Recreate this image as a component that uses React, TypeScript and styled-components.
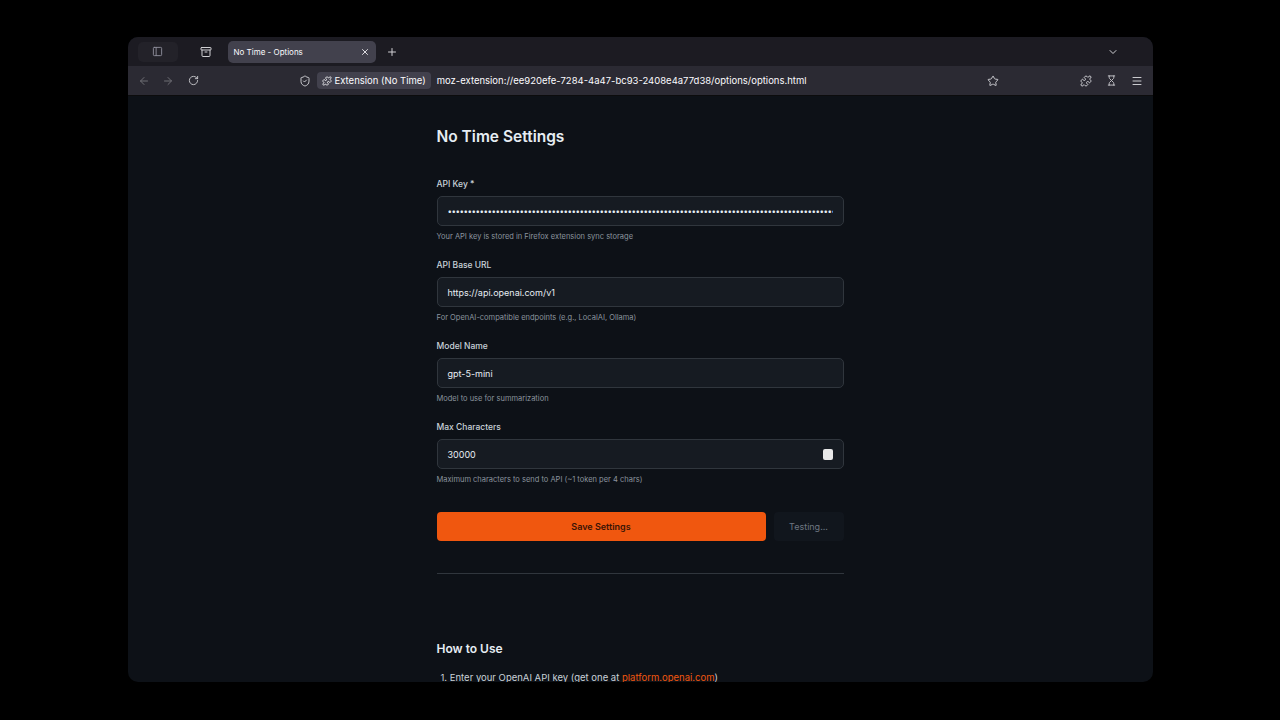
import React from "react";
import styled, { createGlobalStyle } from "styled-components";
import { ArrowLeft, ArrowRight, RotateCw, Star, Puzzle, Hourglass, Menu, ChevronDown, Plus, X, ShieldCheck, PanelLeft, Archive } from "lucide-react";

const Global = createGlobalStyle`
  html, body { margin: 0; background: #000; height: 100%; overflow: hidden; }
  body { font-family: Inter, "Liberation Sans", sans-serif; }
`;

const Screen = styled.div`
  padding-top: 37px;
  display: flex;
  justify-content: center;
`;

const Window = styled.div`
  width: 1025px;
  height: 645px;
  border-radius: 10px;
  overflow: hidden;
  background: #0d1117;
  display: flex;
  flex-direction: column;
`;

const TabBar = styled.div`
  height: 29px;
  background: #1c1b22;
  display: flex;
  align-items: center;
  padding: 0 10px;
  gap: 10px;
  color: #d0d0d4;
`;

const SideBox = styled.div`
  width: 40px;
  height: 20px;
  border-radius: 5px;
  background: #232229;
  display: flex;
  align-items: center;
  justify-content: center;
`;

const Tab = styled.div`
  width: 148px;
  height: 22px;
  margin-left: 6px;
  border-radius: 5px;
  background: #42414d;
  display: flex;
  align-items: center;
  justify-content: space-between;
  padding: 0 6px;
  box-sizing: border-box;
  font-size: 8px;
  color: #fbfbfe;
`;

const Spacer = styled.div`flex: 1;`;

const NavBar = styled.div`
  height: 29px;
  background: #2b2a33;
  display: flex;
  align-items: center;
  padding: 0 10px;
  gap: 14px;
  color: #c9c9ce;
  border-bottom: 1px solid #0c0c0d;
`;

const UrlArea = styled.div`
  margin-left: 86px;
  width: 700px;
  flex-shrink: 0;
  display: flex;
  align-items: center;
  gap: 6px;
  font-size: 9.5px;
  color: #fbfbfe;
  white-space: nowrap;
`;

const ExtChip = styled.div`
  display: flex;
  align-items: center;
  gap: 3px;
  background: #42414d;
  border-radius: 4px;
  padding: 3px 5px;
`;

const Content = styled.div`
  flex: 1;
  display: flex;
  justify-content: center;
  overflow: hidden;
`;

const Column = styled.div`
  width: 407px;
  padding-top: 31px;
  color: #e6edf3;
`;

const Title = styled.h1`
  font-size: 15.5px;
  font-weight: 600;
  margin: 0 0 33px;
`;

const Field = styled.div`
  margin-bottom: 19px;
`;

const Label = styled.div`
  font-size: 8.5px;
  font-weight: 500;
  margin-bottom: 7px;
  color: #c9d1d9;
`;

const InputBox = styled.div`
  height: 28px;
  border: 1px solid #30363d;
  border-radius: 5px;
  background: #161b22;
  display: flex;
  align-items: center;
  padding: 0 10px;
  font-size: 9px;
  color: #e6edf3;
  overflow: hidden;
  white-space: nowrap;
`;

const Dots = styled.span`
  letter-spacing: -0.5px;
  font-size: 8px;
  overflow: hidden;
  flex: 1;
`;

const Spinner = styled.div`
  width: 10px;
  height: 11px;
  background: #e8e8e8;
  border-radius: 2px;
  margin-left: auto;
`;

const Hint = styled.div`
  font-size: 7.5px;
  color: #8b949e;
  margin-top: 6px;
`;

const Buttons = styled.div`
  display: flex;
  gap: 8px;
  margin-top: 28px;
`;

const SaveBtn = styled.div`
  flex: 1;
  height: 29px;
  border-radius: 4px;
  background: #f0570f;
  color: #3a1406;
  font-size: 9px;
  font-weight: 600;
  display: flex;
  align-items: center;
  justify-content: center;
`;

const TestBtn = styled.div`
  width: 70px;
  height: 29px;
  border-radius: 4px;
  background: #11161d;
  color: #6e7681;
  font-size: 9px;
  display: flex;
  align-items: center;
  justify-content: center;
`;

const Divider = styled.hr`
  border: none;
  border-top: 1px solid #30363d;
  margin: 32px 0 0;
`;

const SubTitle = styled.h2`
  font-size: 12px;
  font-weight: 600;
  margin: 67px 0 16px;
`;

const Step = styled.div`
  font-size: 9.5px;
  color: #c9d1d9;
  padding-left: 4px;
  a { color: #f0570f; text-decoration: none; }
`;

const fields = [
  { label: "API Base URL", value: "https://api.openai.com/v1", hint: "For OpenAI-compatible endpoints (e.g., LocalAI, Ollama)" },
  { label: "Model Name", value: "gpt-5-mini", hint: "Model to use for summarization" },
];

export default function App() {
  return (
    <>
      <Global />
      <Screen>
        <Window>
          <TabBar>
            <SideBox><PanelLeft size={11} color="#8f8f9d" /></SideBox>
            <Archive size={12} style={{ marginLeft: 12 }} />
            <Tab>
              <span>No Time - Options</span>
              <X size={10} />
            </Tab>
            <Plus size={12} />
            <Spacer />
            <ChevronDown size={12} style={{ marginRight: 24 }} />
          </TabBar>
          <NavBar>
            <ArrowLeft size={12} color="#6f6e75" />
            <ArrowRight size={12} color="#6f6e75" style={{ marginLeft: -2 }} />
            <RotateCw size={11} />
            <UrlArea>
              <ShieldCheck size={12} color="#c9c9ce" />
              <ExtChip><Puzzle size={10} />Extension (No Time)</ExtChip>
              <span>moz-extension://ee920efe-7284-4a47-bc93-2408e4a77d38/options/options.html</span>
              <Spacer />
              <Star size={12} color="#c9c9ce" />
            </UrlArea>
            <Spacer />
            <Puzzle size={12} />
            <Hourglass size={11} />
            <Menu size={12} />
          </NavBar>
          <Content>
            <Column>
              <Title>No Time Settings</Title>
              <Field>
                <Label>API Key *</Label>
                <InputBox><Dots>{"•".repeat(110)}</Dots></InputBox>
                <Hint>Your API key is stored in Firefox extension sync storage</Hint>
              </Field>
              {fields.map(f => (
                <Field key={f.label}>
                  <Label>{f.label}</Label>
                  <InputBox>{f.value}</InputBox>
                  <Hint>{f.hint}</Hint>
                </Field>
              ))}
              <Field>
                <Label>Max Characters</Label>
                <InputBox>30000<Spinner /></InputBox>
                <Hint>Maximum characters to send to API (~1 token per 4 chars)</Hint>
              </Field>
              <Buttons>
                <SaveBtn>Save Settings</SaveBtn>
                <TestBtn>Testing...</TestBtn>
              </Buttons>
              <Divider />
              <SubTitle>How to Use</SubTitle>
              <Step>1. Enter your OpenAI API key (get one at <a>platform.openai.com</a>)</Step>
            </Column>
          </Content>
        </Window>
      </Screen>
    </>
  );
}
